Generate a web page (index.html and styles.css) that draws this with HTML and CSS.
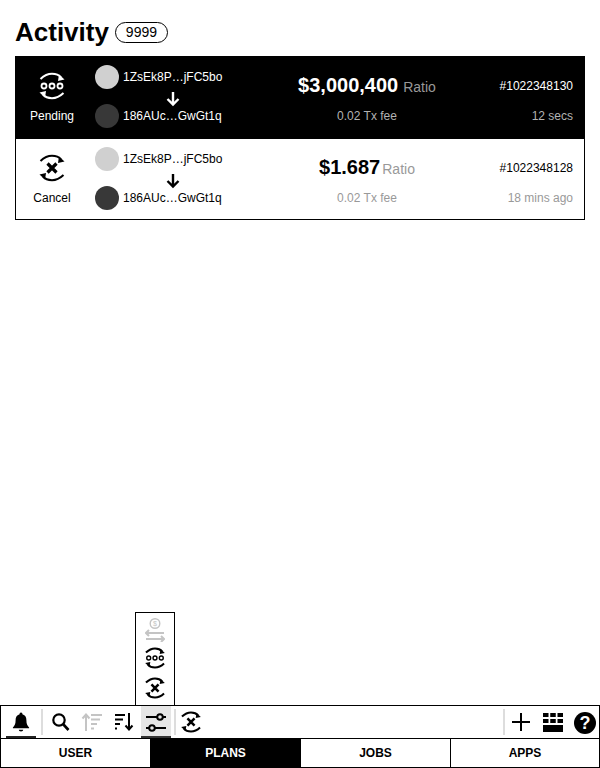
FILE: index.html
```html
<!DOCTYPE html>
<html>
<head>
<title>Activity</title>
<link rel="stylesheet" href="styles.css">
</head>
<body>
<svg class="defs" width="0" height="0">
<symbol id="arcs" viewBox="0 0 28 28">
<g id="arc">
<path class="arc-line" d="M2.500 7Q8 1.800 14 1.800T23 5.500"/>
<path d="M21 2.500L26.500 7.500L20 9Z" fill="currentColor"/>
</g>
<use href="#arc" transform="rotate(180 14 14)"/>
</symbol>
<symbol id="pending" viewBox="0 0 28 28">
<use href="#arcs" width="28" height="28"/>
<g fill="none" stroke="currentColor" stroke-width="1.800">
<circle cx="6" cy="14" r="2.500"/>
<circle cx="14" cy="14" r="2.500"/>
<circle cx="22" cy="14" r="2.500"/>
</g>
</symbol>
<symbol id="cancel" viewBox="0 0 28 28">
<use href="#arcs" width="28" height="28"/>
<path d="M9.500 9.500L18.500 18.500M18.500 9.500L9.500 18.500" stroke="currentColor" stroke-width="3.200" fill="none"/>
</symbol>
</svg>

<main class="content">
<h1 class="title">Activity <span class="badge">9999</span></h1>
<div class="list">
<div class="row row-active">
<div class="status">
<div class="top"><svg class="status-icon"><use href="#pending"/></svg></div>
<div class="bottom">Pending</div>
</div>
<div class="addresses">
<div class="addr"><span class="dot dot-light"></span>1ZsEk8P…jFC5bo</div>
<div class="arrow"><svg width="14" height="15" viewBox="0 0 14 15"><path d="M7 3V15M1.500 10L7 15.500L12.500 10" fill="none" stroke="currentColor" stroke-width="2.400"/></svg></div>
<div class="addr"><span class="dot dot-dark"></span>186AUc…GwGt1q</div>
</div>
<div class="amount">
<div class="top"><b class="value">$3,000,400</b><span class="ratio ratio-wide">Ratio</span></div>
<div class="bottom muted">0.02 Tx fee</div>
</div>
<div class="meta">
<div class="top">#1022348130</div>
<div class="bottom muted">12 secs</div>
</div>
</div>
<div class="row">
<div class="status">
<div class="top"><svg class="status-icon"><use href="#cancel"/></svg></div>
<div class="bottom">Cancel</div>
</div>
<div class="addresses">
<div class="addr"><span class="dot dot-light"></span>1ZsEk8P…jFC5bo</div>
<div class="arrow"><svg width="14" height="15" viewBox="0 0 14 15"><path d="M7 3V15M1.500 10L7 15.500L12.500 10" fill="none" stroke="currentColor" stroke-width="2.400"/></svg></div>
<div class="addr"><span class="dot dot-dark"></span>186AUc…GwGt1q</div>
</div>
<div class="amount">
<div class="top"><b class="value">$1.687</b><span class="ratio">Ratio</span></div>
<div class="bottom muted">0.02 Tx fee</div>
</div>
<div class="meta">
<div class="top">#1022348128</div>
<div class="bottom muted">18 mins ago</div>
</div>
</div>
</div>
</main>

<footer class="dock">
<div class="popup">
<svg class="popup-coin faded" width="20" height="24" viewBox="0 0 20 24"><circle cx="10" cy="5.500" r="4.800" fill="none" stroke="currentColor" stroke-width="1.400"/><text x="10" y="8" class="coin">$</text><path d="M1 15H19M4 12L1 15L4 18M1 21H19M16 18L19 21L16 24" fill="none" stroke="currentColor" stroke-width="2"/></svg>
<svg class="popup-icon"><use href="#pending"/></svg>
<svg class="popup-icon"><use href="#cancel"/></svg>
</div>
<div class="toolbar">
<button class="tool tool-bell"><svg width="18" height="20" viewBox="0 0 20 22"><path d="M10 0.500a1.600 1.600 0 0 1 1.600 1.800C15 3.200 16 6 16 9c0 4 1 6 3 8v1H1v-1c2-2 3-4 3-8 0-3 1-5.800 4.400-6.700A1.600 1.600 0 0 1 10 0.500ZM7.500 19.500h5a2.500 2 0 0 1-5 0Z" fill="currentColor"/></svg></button>
<span class="sep"></span>
<button class="tool"><svg width="20" height="20" viewBox="0 0 20 20"><circle cx="9" cy="8" r="5.700" fill="none" stroke="currentColor" stroke-width="2.200"/><path d="M13 12L18.500 18" stroke="currentColor" stroke-width="2.600"/></svg></button>
<button class="tool tool-off"><svg width="22" height="18" viewBox="0 0 22 18"><path d="M5 18V2M1.500 5.500L5 1.500L8.500 5.500" fill="none" stroke="currentColor" stroke-width="2"/><path d="M10 2H21M10 6.500H19M10 11H16M10 15.500H13" stroke="currentColor" stroke-width="2"/></svg></button>
<button class="tool"><svg width="20" height="18" viewBox="0 0 20 18"><path d="M1 2H11M1 6.500H9M1 11H6M1 15.500H3" stroke="currentColor" stroke-width="2"/><path d="M15 0V16M11.500 12.500L15 16.500L18.500 12.500" fill="none" stroke="currentColor" stroke-width="2"/></svg></button>
<button class="tool tool-on"><svg width="22" height="20" viewBox="0 0 22 20"><path d="M1 5H21M1 16H21" stroke="currentColor" stroke-width="2"/><circle cx="15" cy="5" r="2.800" fill="#e6e6e6" stroke="currentColor" stroke-width="2"/><circle cx="7" cy="16" r="2.800" fill="#e6e6e6" stroke="currentColor" stroke-width="2"/></svg></button>
<span class="sep sep-tight"></span>
<button class="tool tool-last"><svg class="tool-sync"><use href="#cancel"/></svg></button>
<span class="spacer"></span>
<span class="sep sep-right"></span>
<button class="tool"><svg width="20" height="20" viewBox="0 0 20 20"><path d="M10 1V19M1 10H19" stroke="currentColor" stroke-width="2"/></svg></button>
<button class="tool"><svg width="20" height="19" viewBox="0 0 20 19"><path d="M0 0h5.500v4H0zM7.250 0h5.500v4h-5.500zM14.500 0H20v4h-5.500zM0 6h5.500v4H0zM7.250 6h5.500v4h-5.500zM14.500 6H20v4h-5.500zM0 12h20v7H0z" fill="currentColor"/></svg></button>
<span class="help">?</span>
</div>
<nav class="tabs">
<a class="tab">USER</a>
<a class="tab tab-on">PLANS</a>
<a class="tab">JOBS</a>
<a class="tab">APPS</a>
</nav>
</footer>
</body>
</html>
```
FILE: styles.css
```css
* {
box-sizing: border-box;
}
html, body {
height: 100%;
}
body {
margin: 0;
display: flex;
flex-direction: column;
font-family: "Liberation Sans", Arial, sans-serif;
font-size: 12px;
color: #000;
background: #fff;
}
.defs {
position: absolute;
}
.arc-line {
fill: none;
stroke: currentColor;
stroke-width: var(--arc, 2);
}
.content {
flex: 1;
padding: 16px 15px 0;
}
.title {
margin: 0 0 8px;
height: 32px;
display: flex;
align-items: center;
gap: 6px;
font-size: 26px;
line-height: 32px;
}
.badge {
width: 53px;
height: 21px;
border: 1px solid #000;
border-radius: 11px;
font-size: 14px;
font-weight: normal;
line-height: 19px;
text-align: center;
}
.list {
border: 1px solid #000;
}
.row {
display: grid;
grid-template-columns: 72px 179px 200px 1fr;
padding: 8px 11px 9px 0;
}
.row-active {
padding-bottom: 11px;
background: #000;
color: #fff;
}
.top {
height: 40px;
display: flex;
align-items: center;
}
.bottom {
height: 23px;
line-height: 23px;
}
.status {
text-align: center;
}
.status .top {
justify-content: center;
padding-top: 2px;
}
.status-icon {
width: 28px;
height: 28px;
}
.addresses {
padding-left: 7px;
}
.addr {
height: 24px;
display: flex;
align-items: center;
gap: 4px;
}
.dot {
width: 24px;
height: 24px;
border-radius: 50%;
}
.dot-light {
background: #d0d0d0;
}
.dot-dark {
background: #383838;
}
.arrow {
height: 15px;
padding-left: 71px;
}
.arrow svg {
display: block;
overflow: visible;
}
.amount {
text-align: center;
}
.amount .top {
justify-content: center;
align-items: baseline;
line-height: 40px;
}
.value {
font-size: 20px;
}
.ratio {
margin-left: 2px;
font-size: 14px;
color: #999;
}
.ratio-wide {
margin-left: 5px;
}
.muted {
color: #999;
}
.row-active .muted {
color: #b3b3b3;
}
.meta {
text-align: right;
}
.meta .top {
justify-content: flex-end;
padding-top: 2px;
}
.dock {
position: relative;
}
.popup {
position: absolute;
left: 135px;
bottom: 63px;
width: 40px;
height: 93px;
padding-top: 5px;
display: flex;
flex-direction: column;
align-items: center;
gap: 8px;
border: 1px solid #000;
border-bottom: 0;
background: #fff;
}
.popup-coin {
flex: none;
margin-bottom: -3px;
}
.popup-icon {
--arc: 2.600;
width: 22px;
height: 22px;
flex: none;
}
.faded {
color: #c4c4c4;
}
.coin {
font-size: 7px;
text-anchor: middle;
fill: currentColor;
}
.toolbar {
height: 34px;
display: flex;
align-items: flex-start;
gap: 2px;
padding-left: 6px;
border: 1px solid #000;
}
.tool {
width: 30px;
height: 32px;
padding: 2px 0 0;
display: flex;
align-items: center;
justify-content: center;
border: 0;
border-bottom: 2px solid transparent;
background: none;
color: #000;
}
.tool-off {
color: #c4c4c4;
}
.tool-bell {
margin-left: -1px;
border-bottom-color: #222;
}
.tool-on {
background: #e6e6e6;
border-bottom-color: #333;
}
.tool-last {
margin-left: -2px;
}
.tool-sync {
--arc: 2.600;
width: 22px;
height: 22px;
}
.sep {
width: 2px;
height: 26px;
margin: 3px 0 0 3px;
background: #ddd;
}
.sep-tight {
margin-left: 1px;
}
.sep-right {
margin-right: -1px;
}
.spacer {
flex: 1;
}
.help {
width: 22px;
height: 22px;
margin: 6px 3px 0 4px;
border-radius: 50%;
background: #000;
color: #fff;
font-size: 18px;
font-weight: bold;
line-height: 22px;
text-align: center;
}
.tabs {
height: 29px;
display: grid;
grid-template-columns: repeat(4, 1fr);
border-bottom: 1px solid #000;
}
.tab {
border-left: 1px solid #000;
font-weight: bold;
line-height: 28px;
text-align: center;
}
.tab:last-child {
border-right: 1px solid #000;
}
.tab-on {
background: #000;
color: #fff;
}
```
